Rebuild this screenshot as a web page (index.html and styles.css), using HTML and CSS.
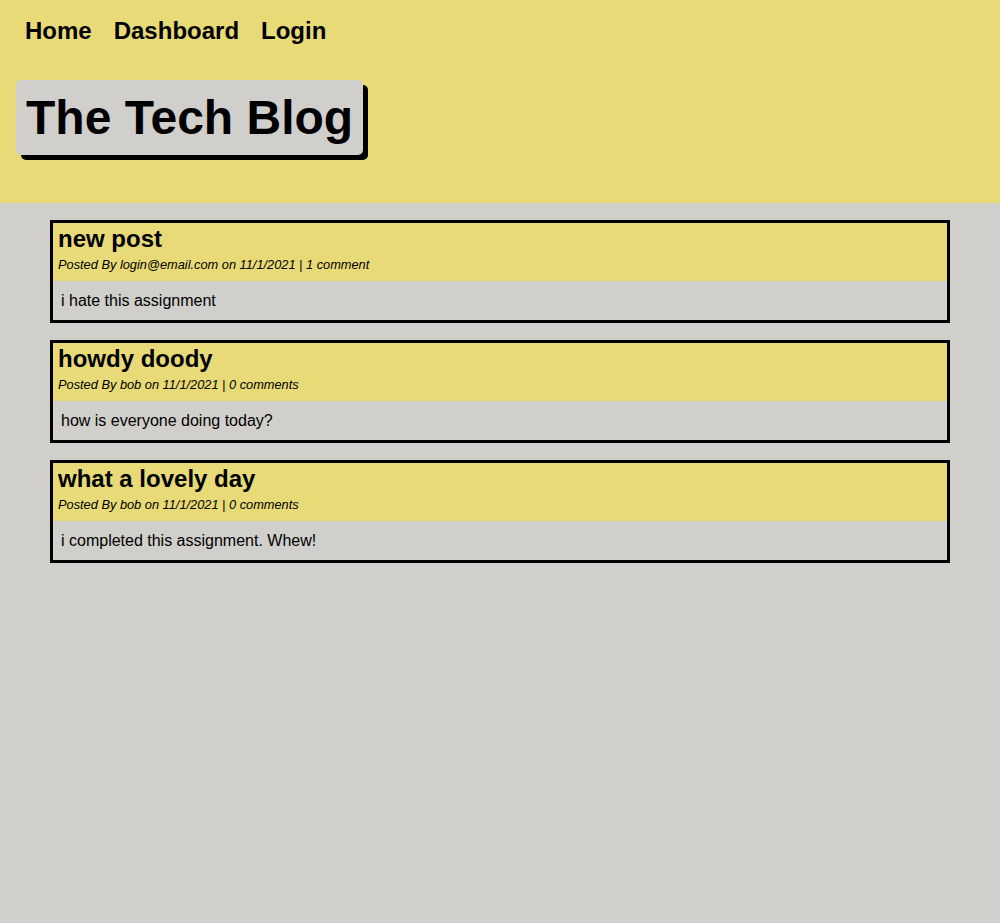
FILE: index.html
```html
<!DOCTYPE html>
<html lang="en">
<head>
<meta charset="utf-8">
<title>The Tech Blog</title>
<link rel="stylesheet" href="styles.css">
</head>
<body>
<header class="site-header">
  <nav class="nav">
    <a class="nav-link" href="#">Home</a>
    <a class="nav-link" href="#">Dashboard</a>
    <a class="nav-link" href="#">Login</a>
  </nav>
  <h1 class="brand">The Tech Blog</h1>
</header>
<main class="posts">
  <article class="post">
    <div class="post-head">
      <h2 class="post-title">new post</h2>
      <p class="post-meta">Posted By login@email.com on 11/1/2021 | 1 comment</p>
    </div>
    <p class="post-body">i hate this assignment</p>
  </article>
  <article class="post">
    <div class="post-head">
      <h2 class="post-title">howdy doody</h2>
      <p class="post-meta">Posted By bob on 11/1/2021 | 0 comments</p>
    </div>
    <p class="post-body">how is everyone doing today?</p>
  </article>
  <article class="post">
    <div class="post-head">
      <h2 class="post-title">what a lovely day</h2>
      <p class="post-meta">Posted By bob on 11/1/2021 | 0 comments</p>
    </div>
    <p class="post-body">i completed this assignment. Whew!</p>
  </article>
</main>
</body>
</html>
```

FILE: styles.css
```css
html, body {
  margin: 0;
  padding: 0;
  background: #d0cfcb;
  font-family: "Liberation Sans", Arial, sans-serif;
  color: #000;
}

.site-header {
  background: #e8da76;
  height: 203px;
  box-sizing: border-box;
  padding: 17px 0 0 16px;
}

.nav {
  display: flex;
  gap: 22px;
  padding-left: 9px;
}

.nav-link {
  font-size: 24px;
  font-weight: bold;
  color: #000;
  text-decoration: none;
}

.brand {
  display: inline-block;
  margin: 35px 0 0 0;
  padding: 10px 10px;
  font-size: 48px;
  font-weight: bold;
  background: #d0cfcb;
  border-radius: 5px;
  box-shadow: 5px 5px 0 #000;
}

.posts {
  display: flex;
  flex-direction: column;
  gap: 17px;
  padding: 17px 50px;
}

.post {
  border: 3px solid #000;
}

.post-head {
  background: #e8da76;
  padding: 2px 5px 9px;
}

.post-title {
  margin: 0 0 4px;
  font-size: 24px;
  font-weight: bold;
}

.post-meta {
  margin: 0;
  font-size: 12.8px;
  font-style: italic;
}

.post-body {
  margin: 0;
  padding: 11px 8px 10px;
  font-size: 16px;
}
```
